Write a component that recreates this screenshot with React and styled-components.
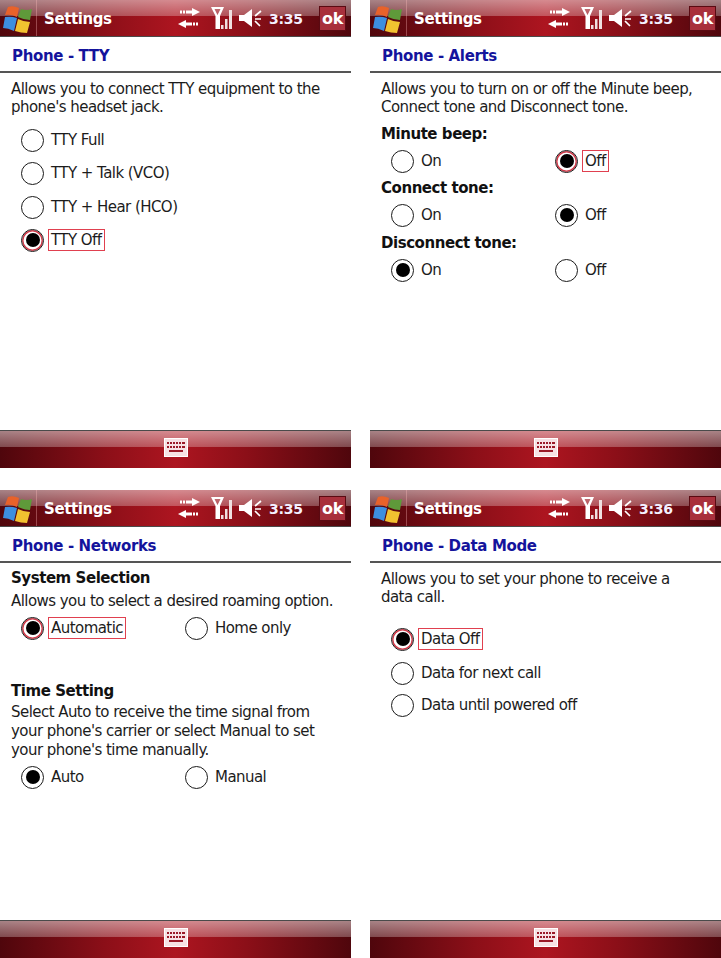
import React from "react";
import styled, { createGlobalStyle } from "styled-components";

const Global = createGlobalStyle`
  html, body { margin: 0; padding: 0; background: #fff; }
  body { font-family: "DejaVu Sans", "Liberation Sans", sans-serif; }
`;

const Sheet = styled.div`
  width: 721px;
  height: 958px;
  display: grid;
  grid-template-columns: 351px 351px;
  grid-template-rows: 468px 468px;
  column-gap: 19px;
  row-gap: 22px;
`;

const Screen = styled.div`
  display: flex;
  flex-direction: column;
  height: 468px;
  overflow: hidden;
  color: #1c1c1c;
`;

const barFill = `
  linear-gradient(to bottom, rgba(255,255,255,.5) 0, rgba(255,255,255,.27) 16px, rgba(255,255,255,0) 16px),
  linear-gradient(to right, #4f060c 0%, #8c0f18 30%, #ad1520 50%, #8c0f18 70%, #4f060c 100%)
`;

const TopBar = styled.div`
  height: 36px;
  flex: none;
  display: flex;
  align-items: center;
  background: ${barFill};
  border-bottom: 1px solid #4a4a4a;
`;

const Divider = styled.div`
  width: 1px;
  height: 36px;
  flex: none;
  margin-right: 7px;
  background: rgba(255, 190, 190, 0.35);
`;

const BarTitle = styled.div`
  font-size: 15px;
  line-height: 20px;
  padding-top: 2px;
  font-weight: bold;
  letter-spacing: -0.4px;
  color: #fff;
  flex: 1;
`;

const StatusIcon = styled.svg`
  display: block;
  flex: none;
  margin-right: ${(p) => p.$gap || 0}px;
`;

const Clock = styled.div`
  font-size: 14px;
  line-height: 20px;
  padding-top: 2px;
  font-weight: bold;
  letter-spacing: -0.3px;
  color: #f4f0ff;
  width: 50px;
  flex: none;
`;

const OkButton = styled.div`
  width: 25px;
  height: 23px;
  margin-right: 5px;
  flex: none;
  display: flex;
  align-items: center;
  justify-content: center;
  font-size: 16px;
  font-weight: bold;
  letter-spacing: -0.3px;
  color: #fff;
  background: #a8303c;
  border: 1px solid #5a0a12;
`;

const Heading = styled.div`
  height: 36px;
  flex: none;
  box-sizing: border-box;
  padding: 10px 0 0 12px;
  font-size: 15px;
  line-height: 18px;
  font-weight: bold;
  letter-spacing: -0.36px;
  color: #14149c;
  border-bottom: 2px solid #555;
`;

const Body = styled.div`
  flex: 1;
  padding: ${(p) => p.$top}px 0 0 11px;
`;

const Text = styled.div`
  font-size: 15px;
  line-height: ${(p) => p.$line || 18}px;
  letter-spacing: -0.55px;
  white-space: nowrap;
  margin-top: ${(p) => p.$before || 0}px;
`;

const Label = styled.div`
  font-size: 15px;
  line-height: 18px;
  font-weight: bold;
  letter-spacing: -0.45px;
  color: #111;
  white-space: nowrap;
  margin-top: ${(p) => p.$before || 0}px;
`;

const RadioRow = styled.div`
  display: grid;
  grid-template-columns: 164px 1fr;
  margin-top: ${(p) => p.$before || 0}px;
  padding-left: 10px;
`;

const RadioItem = styled.div`
  display: flex;
  align-items: center;
  height: 24px;
  margin-top: ${(p) => p.$before || 0}px;
`;

const RadioStack = styled.div`
  padding-left: 10px;
  margin-top: ${(p) => p.$before || 0}px;
`;

const Circle = styled.div`
  width: 23px;
  height: 23px;
  box-sizing: border-box;
  flex: none;
  border-radius: 50%;
  border: 1.5px solid #1a1a1a;
  background: #fff;
  display: flex;
  align-items: center;
  justify-content: center;
  box-shadow: ${(p) => (p.$focused ? "inset 0 0 0 1.5px #d23a4a" : "none")};
`;

const Dot = styled.div`
  width: 14px;
  height: 14px;
  border-radius: 50%;
  background: #000;
`;

const RadioText = styled.div`
  font-size: 15px;
  line-height: 18px;
  letter-spacing: -0.55px;
  white-space: nowrap;
  margin-left: ${(p) => (p.$focused ? 4 : 7)}px;
  padding: ${(p) => (p.$focused ? "1px 2px" : "0")};
  border: ${(p) => (p.$focused ? "1px solid #e0404f" : "none")};
`;

const BottomBar = styled.div`
  height: 38px;
  box-sizing: border-box;
  padding-bottom: 5px;
  flex: none;
  display: flex;
  align-items: center;
  justify-content: center;
  background: ${barFill};
  border-top: 1px solid #4a4a4a;
`;

function Radio({ label, on, focused, before }) {
  return (
    <RadioItem $before={before}>
      <Circle $focused={focused}>{on && <Dot />}</Circle>
      <RadioText $focused={focused}>{label}</RadioText>
    </RadioItem>
  );
}

function WinLogo() {
  return (
    <StatusIcon width="36" height="36" viewBox="0 0 36 36">
      <path d="M8 7 Q13 5 19 8 L17 17 Q11 14 5 15 Z" fill="#e8622a" />
      <path d="M21 9 Q27 11 32 9 L30 20 Q24 20 18 17 Z" fill="#5f9a3a" />
      <path d="M5 17 Q11 16 17 18 L14 31 Q8 28 3 28 Z" fill="#3d8fe0" />
      <path d="M18 19 Q24 22 30 22 L27 33 Q21 33 15 31 Z" fill="#f2c230" />
    </StatusIcon>
  );
}

function Arrows() {
  return (
    <StatusIcon $gap={11} width="22" height="20" viewBox="0 0 22 20">
      <path d="M2 2.500h2v3H2zM5 2.500h2v3H5zM8 2.500h6V0l8 4-8 4V5.500H8z" fill="#fff" />
      <path d="M0 16l8-4v2.500h6v3H8V20zM15 14.500h2v3h-2zM18 14.500h2v3h-2z" fill="#fff" />
    </StatusIcon>
  );
}

function Signal() {
  return (
    <StatusIcon $gap={6} width="22" height="23" viewBox="0 0 22 23">
      <path d="M0 0h13L9 9v13H4.500V9z M3.500 2l3 6 3-6z" fill="#fff" fillRule="evenodd" />
      <rect x="10" y="18" width="2.500" height="4" fill="#f0e0e0" />
      <rect x="14" y="12" width="2.500" height="10" fill="#f0e0e0" />
      <rect x="18" y="3" width="3" height="19" fill="#f0e0e0" />
    </StatusIcon>
  );
}

function Speaker() {
  return (
    <StatusIcon $gap={7} width="23" height="20" viewBox="0 0 23 20">
      <path d="M0 7h5l8-6v18l-8-6H0z" fill="#fff" />
      <path d="M22 3l-6 5M16 11h6M16 13l5 5" stroke="#fff" strokeWidth="1.700" fill="none" />
    </StatusIcon>
  );
}

function Keyboard() {
  return (
    <StatusIcon width="24" height="19" viewBox="0 0 24 19">
      <rect width="24" height="19" fill="#fff" />
      <rect x="1" y="1" width="22" height="17" fill="#f6e2e4" />
      <path d="M3 4h2v2H3zM6 4h2v2H6zM9 4h2v2H9zM12 4h2v2h-2zM15 4h2v2h-2zM18 4h3v2h-3zM3 8h2v2H3zM6 8h2v2H6zM9 8h2v2H9zM12 8h2v2h-2zM15 8h2v2h-2zM18 8h3v2h-3zM5 12h14v2H5z" fill="#9a1a28" />
    </StatusIcon>
  );
}

function Phone({ title, clock = "3:35", top, children }) {
  return (
    <Screen>
      <TopBar>
        <WinLogo />
        <Divider />
        <BarTitle>Settings</BarTitle>
        <Arrows />
        <Signal />
        <Speaker />
        <Clock>{clock}</Clock>
        <OkButton>ok</OkButton>
      </TopBar>
      <Heading>{title}</Heading>
      <Body $top={top}>{children}</Body>
      <BottomBar>
        <Keyboard />
      </BottomBar>
    </Screen>
  );
}

export default function App() {
  return (
    <Sheet>
      <Global />
      <Phone title="Phone - TTY" top={7}>
        <Text>Allows you to connect TTY equipment to the</Text>
        <Text>phone's headset jack.</Text>
        <RadioStack $before={12}>
          <Radio label="TTY Full" />
          <Radio label="TTY + Talk (VCO)" before={9} />
          <Radio label="TTY + Hear (HCO)" before={10} />
          <Radio label="TTY Off" on focused before={9} />
        </RadioStack>
      </Phone>

      <Phone title="Phone - Alerts" top={7}>
        <Text>Allows you to turn on or off the Minute beep,</Text>
        <Text>Connect tone and Disconnect tone.</Text>
        <Label $before={9}>Minute beep:</Label>
        <RadioRow $before={6}>
          <Radio label="On" />
          <Radio label="Off" on focused />
        </RadioRow>
        <Label $before={6}>Connect tone:</Label>
        <RadioRow $before={6}>
          <Radio label="On" />
          <Radio label="Off" on />
        </RadioRow>
        <Label $before={7}>Disconnect tone:</Label>
        <RadioRow $before={6}>
          <Radio label="On" on />
          <Radio label="Off" />
        </RadioRow>
      </Phone>

      <Phone title="Phone - Networks" top={6}>
        <Label>System Selection</Label>
        <Text $before={5}>Allows you to select a desired roaming option.</Text>
        <RadioRow $before={6}>
          <Radio label="Automatic" on focused />
          <Radio label="Home only" />
        </RadioRow>
        <Label $before={42}>Time Setting</Label>
        <Text $line={19} $before={3}>Select Auto to receive the time signal from</Text>
        <Text $line={19}>your phone's carrier or select Manual to set</Text>
        <Text $line={19}>your phone's time manually.</Text>
        <RadioRow $before={5}>
          <Radio label="Auto" on />
          <Radio label="Manual" />
        </RadioRow>
      </Phone>

      <Phone title="Phone - Data Mode" clock="3:36" top={7}>
        <Text>Allows you to set your phone to receive a</Text>
        <Text>data call.</Text>
        <RadioStack $before={21}>
          <Radio label="Data Off" on focused />
          <Radio label="Data for next call" before={10} />
          <Radio label="Data until powered off" before={8} />
        </RadioStack>
      </Phone>
    </Sheet>
  );
}
